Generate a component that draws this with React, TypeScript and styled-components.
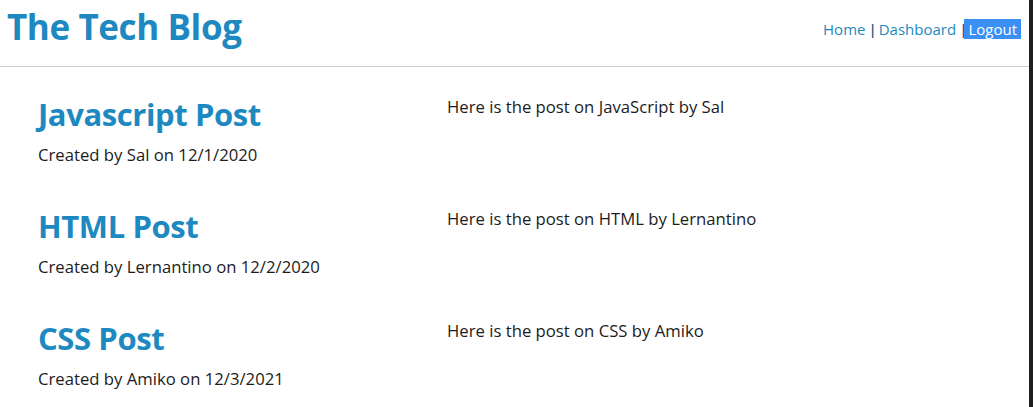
import React from "react";
import styled, { createGlobalStyle } from "styled-components";

const GlobalStyle = createGlobalStyle`
  html, body { margin: 0; padding: 0; background: #fff; }
  body { font-family: "Open Sans", "Noto Sans", sans-serif; color: #1c1c1c; }
`;

const Frame = styled.div`
  display: flex;
  width: 1033px;
  height: 407px;
  overflow: hidden;
`;

const Main = styled.div`
  flex: 1;
  display: flex;
  flex-direction: column;
  min-width: 0;
`;

const Edge = styled.div`
  width: 4px;
  flex-shrink: 0;
  background: #1f1f1f;
`;

const Header = styled.header`
  flex-shrink: 0;
  display: flex;
  justify-content: space-between;
  align-items: flex-start;
  height: 67px;
  border-bottom: 1px solid #cfcfcf;
  padding: 0 8px 0 7px;
  box-sizing: border-box;
`;

const Title = styled.h1`
  margin: 0;
  padding-top: 3px;
  font-size: 35px;
  letter-spacing: -0.4px;
  font-weight: 700;
  line-height: 48px;
  color: #1e89c1;
`;

const Nav = styled.nav`
  display: flex;
  align-items: center;
  margin-top: 19px;
  font-size: 15px;
  line-height: 20px;
  color: #1e89c1;
`;

const NavLink = styled.a<{ $active?: boolean }>`
  color: ${(p) => (p.$active ? "#fff" : "#1e89c1")};
  background: ${(p) => (p.$active ? "#3a8ff5" : "transparent")};
  padding: 0 ${(p) => (p.$active ? "4px" : "0")};
  text-decoration: none;
`;

const Sep = styled.span<{ $tight?: boolean }>`
  color: #17597f;
  font-weight: 600;
  margin: ${(p) => (p.$tight ? "0 -3px 0 3px" : "0 2px 0 3px")};
`;

const PostList = styled.main`
  display: flex;
  flex-direction: column;
  padding: 25px 0 0 38px;
`;

const Post = styled.article`
  display: grid;
  grid-template-columns: 409px 1fr;
  height: 112px;
  flex-shrink: 0;
`;

const PostHead = styled.div`
  display: flex;
  flex-direction: column;
`;

const PostTitle = styled.h2`
  margin: 0;
  font-size: 31px;
  letter-spacing: -0.4px;
  font-weight: 700;
  line-height: 44px;
  color: #1e89c1;
`;

const Meta = styled.p`
  margin: 8px 0 0;
  font-size: 16.7px;
  line-height: 22px;
`;

const Body = styled.p`
  margin: 4px 0 0;
  font-size: 16.7px;
  line-height: 22px;
`;

const posts = [
  { title: "Javascript Post", author: "Sal", date: "12/1/2020", body: "Here is the post on JavaScript by Sal" },
  { title: "HTML Post", author: "Lernantino", date: "12/2/2020", body: "Here is the post on HTML by Lernantino" },
  { title: "CSS Post", author: "Amiko", date: "12/3/2021", body: "Here is the post on CSS by Amiko" },
];

export default function App() {
  return (
    <>
      <GlobalStyle />
      <Frame>
        <Main>
          <Header>
            <Title>The Tech Blog</Title>
            <Nav>
              <NavLink href="#">Home</NavLink>
              <Sep>|</Sep>
              <NavLink href="#">Dashboard</NavLink>
              <Sep $tight>|</Sep>
              <NavLink href="#" $active>Logout</NavLink>
            </Nav>
          </Header>
          <PostList>
            {posts.map((p) => (
              <Post key={p.title}>
                <PostHead>
                  <PostTitle>{p.title}</PostTitle>
                  <Meta>Created by {p.author} on {p.date}</Meta>
                </PostHead>
                <Body>{p.body}</Body>
              </Post>
            ))}
          </PostList>
        </Main>
        <Edge />
      </Frame>
    </>
  );
}
